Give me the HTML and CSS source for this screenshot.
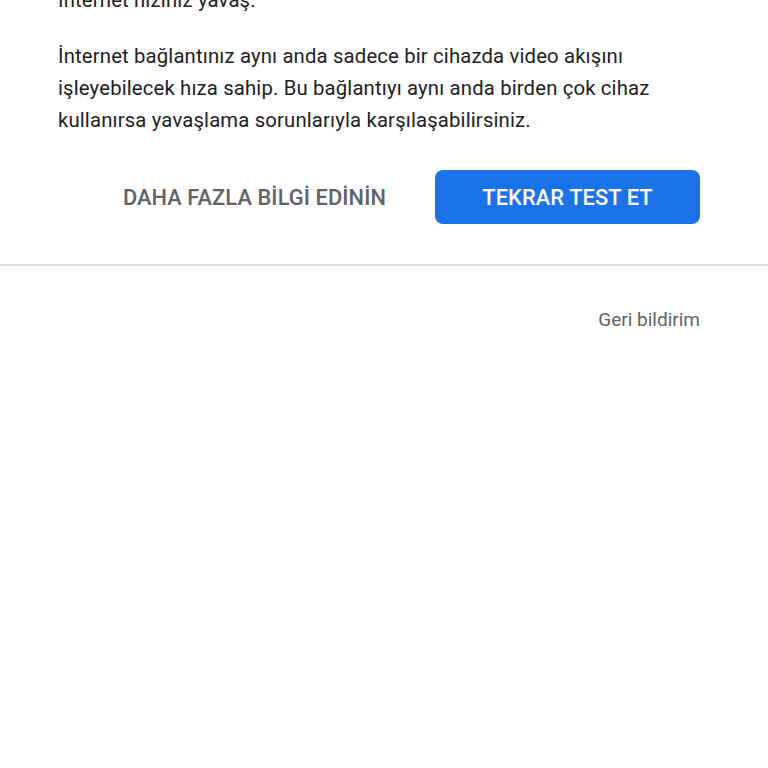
FILE: index.html
```html
<!DOCTYPE html>
<html lang="tr">
<head>
<meta charset="utf-8">
<link rel="stylesheet" href="styles.css">
</head>
<body>
<main class="page">
  <section class="content">
    <p class="lead">İnternet hızınız yavaş.</p>
    <p class="desc">İnternet bağlantınız aynı anda sadece bir cihazda video akışını işleyebilecek hıza sahip. Bu bağlantıyı aynı anda birden çok cihaz kullanırsa yavaşlama sorunlarıyla karşılaşabilirsiniz.</p>
    <div class="actions">
      <button class="btn btn-text">DAHA FAZLA BİLGİ EDİNİN</button>
      <button class="btn btn-primary">TEKRAR TEST ET</button>
    </div>
  </section>
  <hr class="divider">
  <footer class="footer">
    <a class="feedback">Geri bildirim</a>
  </footer>
</main>
</body>
</html>
```
FILE: styles.css
```css
html, body {
  margin: 0;
  padding: 0;
  background: #ffffff;
}
body {
  font-family: Roboto, "Noto Sans", "Liberation Sans", sans-serif;
  color: #202124;
  overflow: hidden;
}
.page {
  display: flex;
  flex-direction: column;
}
.content {
  padding: 0 68px 0 58px;
}
.lead, .desc {
  font-size: 20.3px;
  line-height: 32px;
  margin: 0;
  letter-spacing: 0.16px;
}
.lead {
  margin-top: -16px;
}
.desc {
  margin-top: 24px;
}
.actions {
  display: flex;
  justify-content: flex-end;
  align-items: center;
  gap: 25px;
  margin-top: 34px;
  padding-bottom: 40px;
}
.btn {
  font-family: Roboto, "Noto Sans", "Liberation Sans", sans-serif;
  font-size: 21.8px;
  font-weight: 500;
  height: 54px;
  border: none;
  background: none;
  cursor: pointer;
  letter-spacing: 0.1px;
}
.btn-text {
  color: #5f6368;
  padding: 0 24px;
}
.btn-primary {
  width: 265px;
  background: #1a73e8;
  color: #ffffff;
  border-radius: 8px;
  padding: 0 16px;
}
.divider {
  margin: 0;
  border: none;
  border-top: 2px solid #e0e0e0;
}
.footer {
  display: flex;
  justify-content: flex-end;
  padding: 40px 68px 0 0;
}
.feedback {
  font-size: 19px;
  line-height: 28px;
  color: #5f6368;
}
```
